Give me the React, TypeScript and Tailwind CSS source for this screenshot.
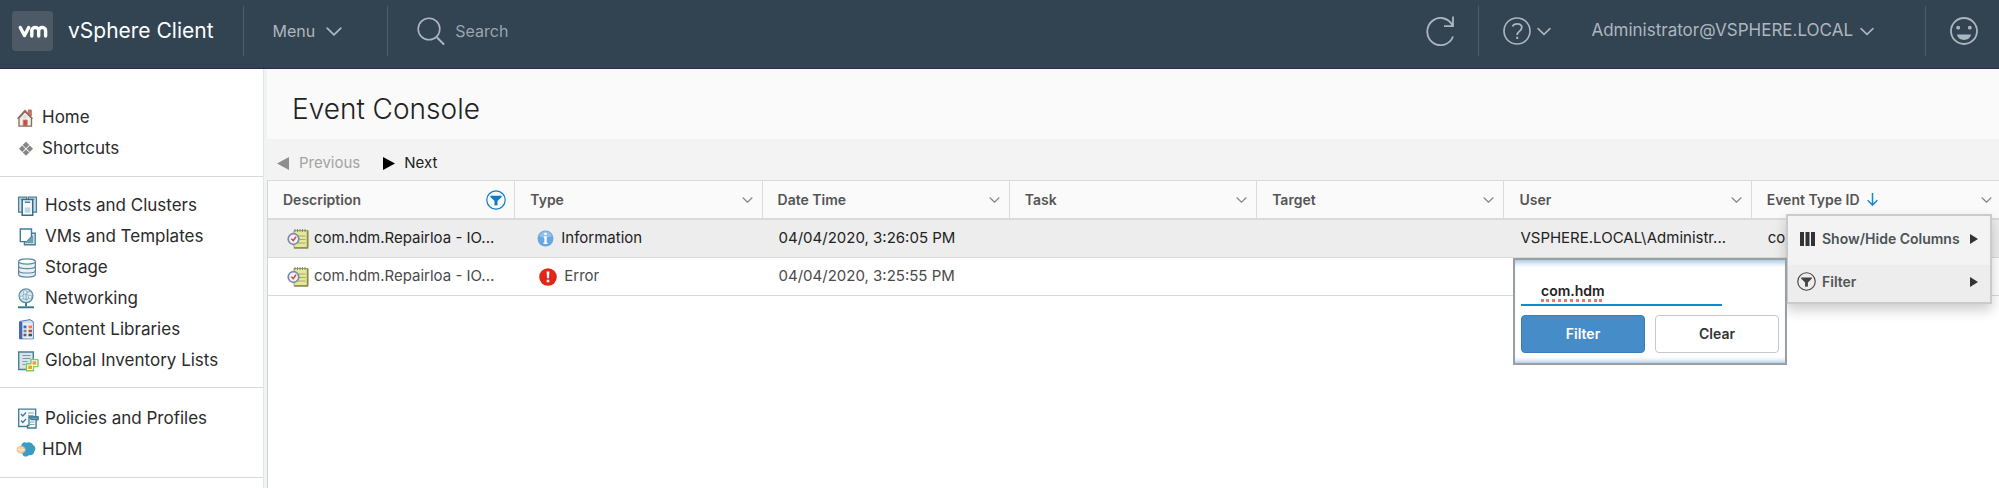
import React from 'react';

const FONT = "font-['Inter','Open_Sans',sans-serif]";

function Chevron({ className }: { className?: string }) {
  return (
    <svg viewBox="0 0 16 9" className={className} fill="none" stroke="currentColor" strokeWidth="1.8" strokeLinecap="round" strokeLinejoin="round" aria-hidden="true">
      <path d="M1.2 1.2 8 7.8l6.800-6.600" />
    </svg>
  );
}

function HomeIcon() {
  return (
    <svg width="16" height="18" viewBox="0 0 16 18" fill="none" aria-hidden="true">
      <path d="M11.300 1h3v6l-3-3z" fill="#d9756b" stroke="#b0564e" strokeWidth=".8" />
      <path d="M2 9 8 2.500 14.500 9v8.200H2z" fill="#f1eeec" stroke="#8d6a5c" strokeWidth="1.300" />
      <path d="M.6 9.800 8 1.600l7.400 8.200" stroke="#8d6a5c" strokeWidth="1.400" />
      <circle cx="8" cy="7.800" r="1.800" fill="#dcdcdc" />
      <path d="M6.200 11h4v6h-4z" fill="#d5483f" stroke="#a08a80" strokeWidth=".8" />
    </svg>
  );
}

function ShortcutsIcon() {
  return (
    <svg width="16" height="16" viewBox="0 0 16 16" className="overflow-visible" fill="#868686" aria-hidden="true">
      <path d="M9 .8 12.300 4 9 7.200 5.700 4zM9 8.400l3.300 3.200L9 14.800l-3.300-3.200zM5.200 4.600l3.200 3.200L5.200 11 2 7.800zM12.800 4.600 16 7.800 12.800 11 9.600 7.800z" />
    </svg>
  );
}

function HostsIcon() {
  return (
    <svg width="19" height="20" viewBox="0 0 19 20" className="overflow-visible" fill="none" stroke="#4a7f96" strokeWidth="1.300" aria-hidden="true">
      <path d="M1.600 1.200h8v15h-8zM11.400 1.200h8v15h-8z" fill="#cfdde5" />
      <path d="M3.500 3.500h4M13.500 3.500h4" stroke="#7fa5b7" />
      <path d="M5.200 4.200V3.400h10.500v15.800H5.200z" fill="#f6fafc" stroke="#2f6f8a" strokeWidth="1.500" />
      <path d="M7.800 6.200h5.400" stroke="#2f6f8a" />
      <path d="M7.700 11.500h5.600v5.200H7.700z" fill="#c4d3dc" stroke="none" />
    </svg>
  );
}

function VmsIcon() {
  return (
    <svg width="19" height="18" viewBox="0 0 19 18" className="overflow-visible" fill="none" aria-hidden="true">
      <path d="M7.500 5.200h10.700v11.600H7.500z" fill="#e8f0f4" stroke="#4a7f96" strokeWidth="1.400" />
      <path d="M3.300 1h11.200v7.600l-4.600 5H3.300z" fill="#fbfdfe" stroke="#3d7d98" strokeWidth="1.400" />
      <path d="M16.300 6.800v8.500H8l3.200-3.800 3.600-2.700z" fill="#6e9db3" />
    </svg>
  );
}

function StorageIcon() {
  return (
    <svg width="19" height="20" viewBox="0 0 19 20" className="overflow-visible" fill="#eaf0f4" stroke="#5d8ba0" strokeWidth="1.200" aria-hidden="true">
      <path d="M1.600 3.500v13c0 1.500 3.800 2.700 8.400 2.700s8.400-1.200 8.400-2.700v-13" />
      <ellipse cx="10" cy="3.500" rx="8.400" ry="2.700" fill="#f8fbfc" />
      <path d="M1.600 8c0 1.500 3.800 2.600 8.400 2.600S18.400 9.500 18.400 8M1.600 12.400C1.600 13.900 5.400 15 10 15s8.400-1.100 8.400-2.600" fill="none" />
    </svg>
  );
}

function NetworkingIcon() {
  return (
    <svg width="19" height="21" viewBox="0 0 19 21" className="overflow-visible" fill="none" aria-hidden="true">
      <circle cx="9" cy="7.800" r="6.900" fill="#d9e6ee" stroke="#5b90a8" strokeWidth="1.300" />
      <path d="M4.500 9.500 8 4.500l5 4.500M4.500 9.500l5 2.500L13 9M8 4.500l5-1M9.500 12l-1-7.500" stroke="#7ba6ba" strokeWidth=".9" />
      <path d="M3 8.200h3.200v2.800H3zM6.500 3h3.200v2.800H6.500zM11.500 7.600h3v2.600h-3z" fill="#fff" stroke="#6c9cb2" strokeWidth=".6" />
      <path d="M9 14.700v3.500" stroke="#3d7d98" strokeWidth="2" />
      <path d="M1 19.300h16" stroke="#2f7390" strokeWidth="1.900" />
    </svg>
  );
}

function LibraryIcon() {
  return (
    <svg width="16" height="21" viewBox="0 0 16 21" className="overflow-visible" aria-hidden="true">
      <path d="M2.500 2.500 13 .6l3.300 2v17.200H2.500z" fill="#cfdcf0" stroke="#5878ad" strokeWidth="1" />
      <path d="M2.300 3h3v17h-3z" fill="#3f68b5" />
      <path d="M5.800 4.200h9.800v15.200H5.800z" fill="#e9eff8" />
      <path d="M6.500 6.500h3v2.800h-3z" fill="#4a63d8" />
      <path d="M11.500 6.500h3.500v2.800h-3.500z" fill="#ff7a3c" />
      <path d="M6.500 10.700h3v2.600h-3z" fill="#6b9a5b" />
      <path d="M11.500 10.700h3.500v2.600h-3.500z" fill="#c04b4b" />
      <path d="M6.500 14.700h3v2.600h-3z" fill="#8c4b66" />
      <path d="M11.500 14.700h3.500v2.600h-3.500z" fill="#2f5a5a" />
    </svg>
  );
}

function InventoryIcon() {
  return (
    <svg width="19" height="20" viewBox="0 0 19 20" className="overflow-visible" fill="none" aria-hidden="true">
      <path d="M1.700 1h14.600v17.500H1.700z" fill="#d8e3ea" stroke="#4a7f96" strokeWidth="1.400" />
      <path d="M5.500 4.500h8M5.500 7.500h8M5.500 10.500h5M5.500 13.500h3" stroke="#7b9bab" strokeWidth="1.200" />
      <path d="M14 8.600h7v7h-4.500v4.200H9.500v-7H14z" fill="#fff" stroke="#7cc862" strokeWidth="1.400" strokeLinejoin="round" />
      <path d="M15.500 10.200h3.800v3.600h-3.800zM11.200 14.500H15V18h-3.800z" fill="#f5a11f" />
    </svg>
  );
}

function PoliciesIcon() {
  return (
    <svg width="19" height="21" viewBox="0 0 19 21" className="overflow-visible" fill="none" stroke="#3d7d98" strokeWidth="1.300" aria-hidden="true">
      <path d="M1.700 1.200h17v17.300h-17z" fill="#f4f8fa" />
      <path d="m4 6 1.800 2L9 4.500M4 12.500l1.800 2L9 11" strokeWidth="1.200" />
      <path d="M11 5h5.500M11 7.500h5.500" stroke="#7fa5b7" strokeWidth="1.100" />
      <path d="M12 9h9v2.500h-2V20h-8.500v-2.500H12z" fill="#fff" />
      <path d="M12.500 9h8.300v2.600h-6.600z" fill="#6e9db3" />
      <path d="M13 14h4.500M13 16.500h4.500" stroke="#7fa5b7" strokeWidth="1.100" />
    </svg>
  );
}

function HdmIcon() {
  return (
    <svg width="16" height="17" viewBox="0 0 16 17" className="overflow-visible" fill="none" aria-hidden="true">
      <path d="M4.500 5.500C4 2.500 7 .5 9 1.700c3-1.200 6.500-.2 7 2.300 2.800 1.300 3 5 1.200 6.800-.3 3-3.200 4-5.200 3.300-2 2.200-5.500 2-6.500-.6z" fill="#2f9ed2" />
      <path d="M12.500 4c2-.6 3 .7 2.600 2.500s1 2.500-.5 4.500M9.500 12c1.500 0 2-1 3.200-.8M10 4l1.500 2" stroke="#8a8a5c" strokeWidth=".9" />
      <path d="M.5 6.800C1.800 5 4.500 4.800 6.500 5.800c2 1 2.300 3.800 1 5.200-1.700 1.500-5 1.300-6.500 0-.9-1-1-3.200-.5-4.200z" fill="#f4d2a4" stroke="#e2ac6d" strokeWidth=".7" />
      <path d="M1 8.300c2 .8 4 .8 6.500 0" stroke="#fdf3e2" strokeWidth="1" />
    </svg>
  );
}

function EventIcon() {
  return (
    <svg width="22" height="21" viewBox="0 0 22 21" fill="none" aria-hidden="true" className="shrink-0">
      <path d="M7 2.500h14v17H7z" fill="#e6e79a" stroke="#a8a45a" strokeWidth="1" />
      <path d="M20.500 2.500v17.500H7" stroke="#8a8a4d" strokeWidth="1.500" />
      <path d="M8 1v3M10.500 1v3M13 1v3M15.500 1v3M18 1v3" stroke="#6f7f78" strokeWidth=".9" />
      <path d="M9.500 8h9M9.500 11.500h9M9.500 15h9" stroke="#a3b06a" strokeWidth="1" />
      <circle cx="6.500" cy="11" r="5.300" fill="#eef2fa" stroke="#7e8aa5" strokeWidth="1.700" />
      <path d="m4.300 10.700 2 2L9 8.800" stroke="#d34343" strokeWidth="1.500" />
    </svg>
  );
}

function InfoIcon() {
  return (
    <svg width="17" height="17" viewBox="0 0 17 17" aria-hidden="true" className="shrink-0">
      <circle cx="8.500" cy="8.500" r="8" fill="#6ba7dc" />
      <path d="M2 6a7 7 0 0 1 13 0c-3 2-10 2-13 0z" fill="#92c0e8" />
      <path d="M7.300 2.800h2.400v2.300H7.300zM6.800 6.300h2.900v6.200h.8V14H6.500v-1.500h.9V7.800h-.6z" fill="#fff" />
    </svg>
  );
}

function ErrorIcon() {
  return (
    <svg width="18" height="18" viewBox="0 0 18 18" aria-hidden="true" className="shrink-0">
      <circle cx="9" cy="9" r="8.800" fill="#e12617" />
      <path d="M7.600 3.500h2.800L10 10.300H8zM7.700 11.700h2.600v2.500H7.700z" fill="#fff" />
    </svg>
  );
}

function FunnelIcon({ className }: { className?: string }) {
  return (
    <svg viewBox="0 0 20 20" className={className} fill="none" aria-hidden="true">
      <circle cx="10" cy="10" r="9.200" stroke="currentColor" strokeWidth="1.200" />
      <path d="M4.300 5.700h11.400v1.200L11.500 11v4.200l-3 .4V11L4.300 6.900z" className="fill-current" />
    </svg>
  );
}

type Item = { label: string; icon: React.ReactNode };

const groups: { items: Item[]; pad: string }[] = [
  {
    pad: 'pt-[33px] pb-3',
    items: [
      { label: 'Home', icon: <HomeIcon /> },
      { label: 'Shortcuts', icon: <ShortcutsIcon /> },
    ],
  },
  {
    pad: 'pt-[13px] pb-[11px]',
    items: [
      { label: 'Hosts and Clusters', icon: <HostsIcon /> },
      { label: 'VMs and Templates', icon: <VmsIcon /> },
      { label: 'Storage', icon: <StorageIcon /> },
      { label: 'Networking', icon: <NetworkingIcon /> },
      { label: 'Content Libraries', icon: <LibraryIcon /> },
      { label: 'Global Inventory Lists', icon: <InventoryIcon /> },
    ],
  },
  {
    pad: 'pt-[15px] pb-3',
    items: [
      { label: 'Policies and Profiles', icon: <PoliciesIcon /> },
      { label: 'HDM', icon: <HdmIcon /> },
    ],
  },
];

const columns = ['Description', 'Type', 'Date Time', 'Task', 'Target', 'User', 'Event Type ID'];

function Divider() {
  return <span className="h-[50px] w-px shrink-0 bg-[#4d5d6b]" />;
}

function Header() {
  return (
    <header className="flex h-[69px] items-start border-b border-[#2b2a55] bg-[#324352] pt-[6px] text-base text-[#adb6be]">
      <a href="#home" className="flex h-[50px] items-center pl-3 text-[21px] text-white">
        <span className="flex h-10 w-[41px] items-center justify-center rounded bg-[#4d5a66]">
          <svg width="30" height="13" viewBox="0 0 30 13" fill="none" stroke="#fff" strokeWidth="3.400" strokeLinecap="round" strokeLinejoin="round" aria-hidden="true">
            <path d="M2.300 2.500 6.500 10.500 10.700 2.500M13.800 11V5.500c0-4 6.900-4 6.900 0V11M20.700 5.500c0-4 6.900-4 6.900 0V11" />
          </svg>
        </span>
        <span className="ml-[15px]">vSphere Client</span>
      </a>
      <span className="ml-[29px] flex">
        <Divider />
      </span>
      <button type="button" className="ml-[29px] flex h-[50px] items-center gap-[11px]">
        Menu
        <Chevron className="h-[9px] w-4" />
      </button>
      <span className="ml-[45px] flex">
        <Divider />
      </span>
      <label className="ml-[29px] flex h-[50px] items-center gap-[10px]">
        <svg width="28" height="28" viewBox="0 0 28 28" fill="none" stroke="currentColor" strokeWidth="1.600" strokeLinecap="round" aria-hidden="true">
          <circle cx="12" cy="12" r="10.800" />
          <path d="m20.500 21 6 6" strokeWidth="2" />
        </svg>
        <input type="text" aria-label="Search" placeholder="Search" className="w-[200px] bg-transparent outline-none placeholder:text-[#9aa5ae]" />
      </label>
      <div className="ml-auto flex h-[50px] items-center">
        <button type="button" aria-label="Refresh" className="mr-6">
          <svg width="28" height="30" viewBox="0 0 28 30" fill="none" stroke="currentColor" strokeWidth="1.800" aria-hidden="true">
            <path d="M27 20.500A13.300 13.600 0 1 1 26.500 9.500M27 .5v9.700h-9" />
          </svg>
        </button>
        <Divider />
        <button type="button" aria-label="Help" className="ml-6 flex items-center gap-[6px]">
          <svg width="28" height="28" viewBox="0 0 28 28" fill="none" stroke="currentColor" strokeWidth="1.600" aria-hidden="true">
            <circle cx="14" cy="14" r="13" />
            <path d="M9.500 9.500c.8-1.800 2.500-2.600 4.600-2.600 2.800 0 4.700 1.500 4.700 3.700 0 3.600-4.600 3.500-4.600 7.300" strokeWidth="1.800" />
            <path d="M14.200 19.700v2.300" strokeWidth="2" />
          </svg>
          <Chevron className="h-[9px] w-[14px]" />
        </button>
        <button type="button" className="mr-[51px] ml-10 flex items-center gap-[7px] text-[17px]">
          Administrator@VSPHERE.LOCAL
          <Chevron className="h-[9px] w-[14px]" />
        </button>
        <Divider />
        <button type="button" aria-label="Feedback" className="mr-[21px] ml-6">
          <svg width="28" height="28" viewBox="0 0 28 28" fill="none" stroke="currentColor" strokeWidth="1.800" aria-hidden="true">
            <circle cx="14" cy="14" r="13" />
            <circle cx="8.200" cy="10.700" r="1.900" className="fill-current" stroke="none" />
            <circle cx="19.800" cy="10.700" r="1.900" className="fill-current" stroke="none" />
            <path d="M7 17.600h14c-1 7.200-13 7.200-14 0z" className="fill-current" stroke="none" />
          </svg>
        </button>
      </div>
    </header>
  );
}

function FilterPanel() {
  return (
    <form className="absolute top-[42px] right-full mr-px h-[107px] w-[274px] border-2 border-[#9a9fa4] bg-white px-[6px] pt-4 shadow-[inset_0_7px_5px_-4px_#a9c8e6,inset_0_-5px_4px_-3px_#a9c8e6]">
      <div className="relative w-[201px]">
        <input
          type="text"
          aria-label="Filter value"
          defaultValue="com.hdm"
          spellCheck={false}
          className="block h-[30px] w-full border-b-2 border-[#0d8bd0] bg-transparent pl-5 text-sm font-semibold text-[#222] outline-none"
        />
        <span className="pointer-events-none absolute bottom-1 left-5 w-[61px] border-b-3 border-dotted border-[#f4716f]" />
      </div>
      <div className="mt-[9px] flex gap-[10px] text-sm">
        <button type="button" className="h-[38px] flex-1 rounded border border-[#3a7cb8] bg-[#468cc8] font-semibold text-white">
          Filter
        </button>
        <button type="button" className="h-[38px] flex-1 rounded border border-[#c8c8c8] bg-white font-semibold text-[#333]">
          Clear
        </button>
      </div>
    </form>
  );
}

function ColumnMenu() {
  return (
    <div className="absolute top-[33px] right-[7px] z-10 w-[206px] border-2 border-[#cacaca] bg-[#f3f3f3] text-sm font-semibold text-[#4b5357] shadow-[0_6px_12px_rgba(0,0,0,0.2)]">
      <button type="button" className="flex h-[49px] w-full items-center pb-1 pl-3">
        <svg width="15" height="14" viewBox="0 0 15 14" fill="#333" aria-hidden="true">
          <path d="M0 0h4v14H0zM5.500 0h4v14h-4zM11 0h4v14h-4z" />
        </svg>
        <span className="ml-[7px] whitespace-nowrap">Show/Hide Columns</span>
        <svg width="8" height="10" viewBox="0 0 8 10" className="mr-3 ml-auto" fill="#333" aria-hidden="true">
          <path d="M0 0v10l8-5z" />
        </svg>
      </button>
      <button type="button" className="flex h-[37px] w-full items-center bg-[#ededed] pb-1 pl-[9px] text-[#555]">
        <FunnelIcon className="h-[19px] w-[19px] text-[#444]" />
        <span className="ml-[6px]">Filter</span>
        <svg width="8" height="10" viewBox="0 0 8 10" className="mr-3 ml-auto" fill="#333" aria-hidden="true">
          <path d="M0 0v10l8-5z" />
        </svg>
      </button>
      <FilterPanel />
    </div>
  );
}

function EventRow({ selected, type, date, user, eventId }: { selected?: boolean; type: 'Information' | 'Error'; date: string; user: string; eventId: string }) {
  return (
    <tr className={selected ? 'bg-[#ededed] text-[#222]' : 'bg-white text-[#4a4a4a]'}>
      <td className="h-[38px] border-b border-[#dadada] p-0 pl-[19px]">
        <span className="flex items-center gap-[5px]">
          <EventIcon />
          <span className="whitespace-nowrap">com.hdm.Repairloa - IO...</span>
        </span>
      </td>
      <td className={`border-b border-[#dadada] p-0 ${type === 'Information' ? 'pl-[22px]' : 'pl-6'}`}>
        <span className="flex items-center gap-[7px]">
          {type === 'Information' ? <InfoIcon /> : <ErrorIcon />}
          {type}
        </span>
      </td>
      <td className="border-b border-[#dadada] p-0 pl-4 whitespace-nowrap">{date}</td>
      <td className="border-b border-[#dadada] p-0" />
      <td className="border-b border-[#dadada] p-0" />
      <td className="border-b border-[#dadada] p-0 pl-4 whitespace-nowrap">{user}</td>
      <td className="border-b border-[#dadada] p-0 pl-4 whitespace-nowrap">{eventId}</td>
    </tr>
  );
}

export default function App() {
  return (
    <div className={`flex min-h-screen flex-col bg-white text-[#222] ${FONT}`}>
      <Header />
      <div className="flex flex-1">
        <nav className="w-[263px] shrink-0 text-[17px] text-[#2b2b2b]">
          {groups.map((g, i) => (
            <ul key={i} className={`border-b border-[#d5d9dc] ${g.pad}`}>
              {g.items.map((it) => (
                <li key={it.label}>
                  <a href="#nav" className="flex h-[31px] items-center gap-[9px] pl-[17px] whitespace-nowrap">
                    {it.icon}
                    <span>{it.label}</span>
                  </a>
                </li>
              ))}
            </ul>
          ))}
        </nav>
        <div className="w-1 shrink-0 border-l border-[#e2e6e8] bg-[#f0f3f4]" />
        <main className="flex min-w-0 flex-1 flex-col">
          <h1 className="flex h-[70px] items-center bg-[#fafafa] pt-[10px] pl-[25px] text-[28px] font-light">Event Console</h1>
          <div className="flex h-[41px] items-center bg-[#f3f3f3] pt-[7px] pl-[10px] text-[15px]">
            <button type="button" disabled className="flex items-center gap-[10px] text-[#a3a3a3]">
              <svg width="12" height="13" viewBox="0 0 12 13" fill="#8f8f8f" aria-hidden="true">
                <path d="M12 0v13L0 6.500z" />
              </svg>
              Previous
            </button>
            <button type="button" className="ml-[23px] flex items-center gap-[9px]">
              <svg width="12" height="13" viewBox="0 0 12 13" fill="#000" aria-hidden="true">
                <path d="M0 0v13l12-6.500z" />
              </svg>
              Next
            </button>
          </div>
          <div className="flex-1 border-l border-[#d5d5d5]">
            <table className="w-full table-fixed border-separate border-spacing-0 text-[15px]">
              <thead>
                <tr className="text-sm">
                  {columns.map((c, i) => (
                    <th
                      key={c}
                      className={`relative h-10 border-t border-b-2 border-t-[#dadada] border-b-[#dadada] bg-[#fafafa] p-0 pl-[15px] text-left font-semibold text-[#555] ${i < 6 ? 'border-r border-r-[#dadada]' : ''}`}
                    >
                      <span className="flex items-center">
                        {c}
                        {i === 6 && (
                          <svg width="11" height="13" viewBox="0 0 11 13" className="ml-[7px]" fill="none" stroke="#1b87cf" strokeWidth="1.500" aria-hidden="true">
                            <path d="M5.500 0v12M.7 7.300l4.800 4.800 4.800-4.800" />
                          </svg>
                        )}
                        {i === 0 ? (
                          <button type="button" aria-label="Edit filter" className="mr-2 ml-auto">
                            <FunnelIcon className="h-5 w-5 text-[#0d7fc0]" />
                          </button>
                        ) : (
                          <button type="button" aria-label={`${c} options`} className={`ml-auto ${i === 6 ? 'mr-[7px]' : 'mr-[9px]'}`}>
                            <Chevron className="h-[6px] w-[11px] text-[#888]" />
                          </button>
                        )}
                      </span>
                      {i === 6 && <ColumnMenu />}
                    </th>
                  ))}
                </tr>
              </thead>
              <tbody>
                <EventRow selected type="Information" date="04/04/2020, 3:26:05 PM" user="VSPHERE.LOCAL\Administr..." eventId="co" />
                <EventRow type="Error" date="04/04/2020, 3:25:55 PM" user="" eventId="" />
              </tbody>
            </table>
          </div>
        </main>
      </div>
    </div>
  );
}
